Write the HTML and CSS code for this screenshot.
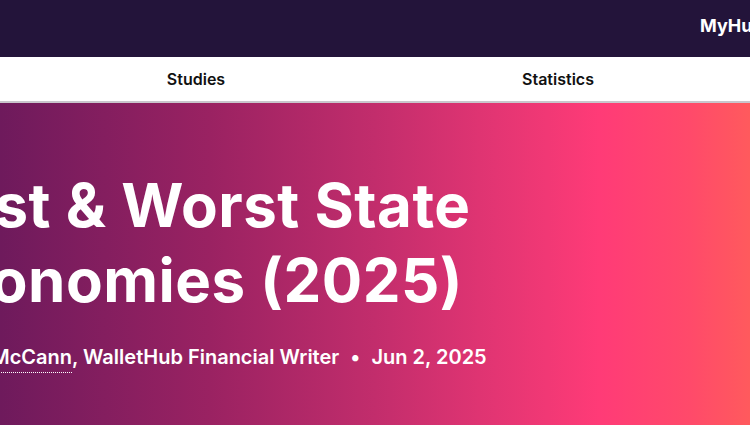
FILE: index.html
```html
<!DOCTYPE html>
<html>
<head>
<meta charset="utf-8">
<link rel="stylesheet" href="styles.css">
</head>
<body>
<header class="topbar">
  <span class="myhub">MyHub</span>
</header>
<nav class="nav">
  <a class="nav-item">Studies</a>
  <a class="nav-item">Statistics</a>
</nav>
<section class="hero">
  <div class="hero-inner">
    <h1 class="title">Best &amp; Worst State<br>Economies (2025)</h1>
    <p class="byline">By <span class="author">Adam McCann</span>, WalletHub Financial Writer <span class="dot">•</span> Jun 2, 2025</p>
  </div>
</section>
</body>
</html>
```
FILE: styles.css
```css
html, body {
  margin: 0;
  padding: 0;
  overflow: hidden;
  width: 750px;
  height: 430px;
  background: #fff;
  font-family: Inter, "Noto Sans", sans-serif;
}
.topbar {
  height: 57px;
  background: #23143a;
  display: flex;
  align-items: center;
  padding-left: 700px;
  box-sizing: border-box;
  white-space: nowrap;
}
.myhub {
  color: #fff;
  font-weight: 700;
  font-size: 18px;
  margin-top: -6px;
}
.nav {
  height: 46px;
  background: #fff;
  display: flex;
  padding-left: 15px;
  border-bottom: 2px solid #c9c6cc;
  box-sizing: border-box;
}
.nav-item {
  width: 362px;
  flex: none;
  display: flex;
  align-items: center;
  justify-content: center;
  font-weight: 600;
  font-size: 16px;
  color: #111;
}
.hero {
  height: 322px;
  background: linear-gradient(90deg, #6e1a5c 0%, #9a2262 28%, #c22d6c 50%, #e33573 66%, #ff3b77 80%, #ff4a6a 92%, #ff5a5d 100%);
  overflow: hidden;
}
.hero-inner {
  padding-top: 65px;
  white-space: nowrap;
}
.title {
  margin: 0 0 0 -82px;
  color: #fff;
  font-weight: 700;
  font-size: 60px;
  line-height: 75px;
  letter-spacing: 0.5px;
}
.byline {
  margin: 27px 0 0 -100px;
  color: #fff;
  font-weight: 600;
  font-size: 20px;
}
.author {
  border-bottom: 1px dotted #fff;
  padding-bottom: 3px;
}
.dot {
  margin: 0 6px;
}
```
